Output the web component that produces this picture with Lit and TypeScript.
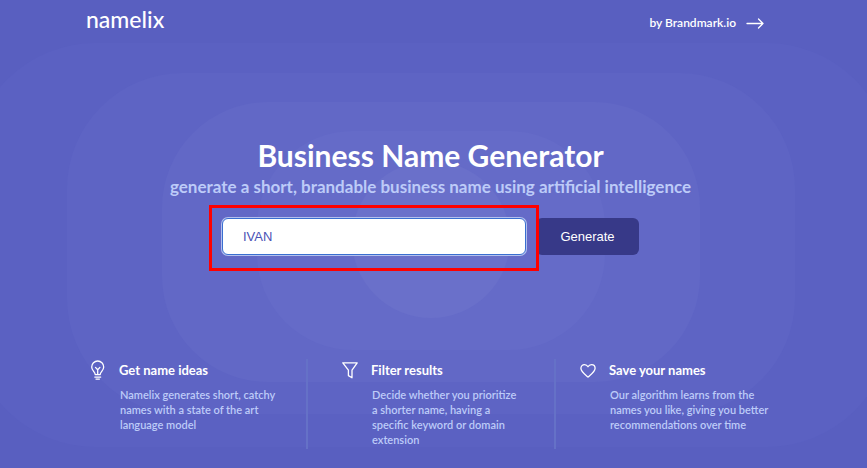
import { LitElement, html, svg, css } from "lit";
import { customElement, state } from "lit/decorators.js";

const bulb = svg`<svg viewBox="0 0 16 20" width="16" height="20" aria-hidden="true">
  <path d="M5.2 14.6C5.2 11.8 1.7 10.6 1.7 6.9a6 5.9 0 0 1 12 0c0 3.7-3.5 4.9-3.5 7.7zM7.7 14.2V9.6M5.5 7.4l2.2 2.3 2.2-2.3M4.8 17.1h5.9M6 19.1h3.4"/></svg>`;
const funnel = svg`<svg viewBox="0 0 16 20" width="16" height="20" aria-hidden="true">
  <path d="M.8 2.8h14.4l-5.200 7.400v7.600l-3.600-2.200v-5.400z"/></svg>`;
const heart = svg`<svg viewBox="0 0 16 20" width="16" height="20" aria-hidden="true">
  <path d="M8 17C5 14.5.9 11.8.9 8.3.9 6.1 2.5 4.6 4.5 4.6 6.1 4.6 7.3 5.5 8 6.8c.7-1.3 1.9-2.2 3.5-2.2 2 0 3.6 1.5 3.6 3.7C15.1 11.8 11 14.5 8 17z"/></svg>`;

const features = [
  { icon: bulb, title: "Get name ideas", lines: ["Namelix generates short, catchy", "names with a state of the art", "language model"] },
  { icon: funnel, title: "Filter results", lines: ["Decide whether you prioritize", "a shorter name, having a", "specific keyword or domain", "extension"] },
  { icon: heart, title: "Save your names", lines: ["Our algorithm learns from the", "names you like, giving you better", "recommendations over time"] },
];

const rings = [
  { y: 43, w: 920, h: 404, r: 124, fill: "#5b61c2" },
  { y: 73, w: 728, h: 341, r: 116, fill: "#5e64c4" },
  { y: 102, w: 538, h: 280, r: 106, fill: "#6268c6" },
  { y: 131, w: 348, h: 219, r: 96, fill: "#656bc8" },
  { y: 161, w: 158, h: 157, r: 79, fill: "#6a70ca" },
];

@customElement("app-root")
export class AppRoot extends LitElement {
  @state() keyword = "IVAN";

  static styles = css`
    :host {
      display: block;
      font-family: Lato, "Open Sans", sans-serif;
      color: #fff;
    }
    * { box-sizing: border-box; }
    .page {
      position: relative;
      min-height: 100vh;
      overflow: hidden;
      background: #595fc0;
    }
    .rings {
      position: absolute;
      inset: 0;
      width: 100%;
      height: 100%;
    }
    .content { position: relative; padding-right: 6px; }
    header {
      display: flex;
      justify-content: space-between;
      align-items: center;
      height: 44px;
      padding: 0 97px 0 86px;
    }
    a { color: inherit; text-decoration: none; }
    .logo { font-size: 23px; line-height: 36px; padding-bottom: 6px; font-weight: 500; }
    .by {
      display: flex;
      align-items: center;
      gap: 10px;
      font-size: 12px;
      font-weight: 600;
    }
    svg { flex: none; fill: none; stroke: #fff; stroke-width: 1.3; stroke-linecap: round; stroke-linejoin: round; }
    .by svg { margin-top: 2px; }
    .rings { stroke: none; }
    .hero { padding-top: 91px; text-align: center; }
    h1 { margin: 0; font-size: 30px; line-height: 40px; font-weight: 700; }
    .sub { margin: 0; font-size: 17px; line-height: 24px; font-weight: 700; color: #bdcbf8; }
    form {
      display: flex;
      justify-content: center;
      margin-top: 19px;
      gap: 10px;
    }
    .field { position: relative; width: 304px; }
    .mark {
      position: absolute;
      inset: -13px -13px -16px;
      z-index: 1;
      border: 3px solid #f00;
      pointer-events: none;
    }
    input, button { height: 37px; font: 13px "Liberation Sans", Arial, sans-serif; border-radius: 6px; }
    input {
      display: block;
      width: 100%;
      padding: 0 20px;
      border: 1px solid #3a6fd0;
      box-shadow: 0 0 0 1px #b3c0ee;
      color: #4a52b5;
      background: #fff;
      outline: none;
    }
    button { width: 103px; padding: 0; border: 0; color: #fff; background: #373988; }
    .features {
      display: grid;
      grid-template-columns: 216fr 248fr 307fr;
      margin: 104px 0 0 90px;
    }
    .feature {
      display: grid;
      grid-template-columns: 16px 1fr;
      column-gap: 13px;
      align-content: start;
      height: 90px;
    }
    .feature svg { margin-top: 1px; }
    .feature + .feature { border-left: 2px solid #6571c7; padding-left: 34px; }
    .feature:last-child { padding-left: 24px; }
    h2 { margin: 0; font-size: 13px; line-height: 22px; font-weight: 700; }
    .feature p {
      grid-column: 2;
      margin: 6px 0 0 1px;
      font-size: 11px;
      line-height: 15px;
      font-weight: 600;
      color: #bdcbf8;
      white-space: nowrap;
    }
  `;

  render() {
    return html`<div class="page">
      <svg class="rings" viewBox="0 0 867 468" preserveAspectRatio="xMidYMid slice" aria-hidden="true">
        ${rings.map((r) => svg`<rect x=${431 - r.w / 2} y=${r.y} width=${r.w} height=${r.h} rx=${r.r} fill=${r.fill} />`)}
      </svg>
      <div class="content">
        <header>
          <a class="logo" href="#">namelix</a>
          <a class="by" href="#">by Brandmark.io
            <svg viewBox="0 0 18 12" width="18" height="12" aria-hidden="true"><path d="M1 6.5h16M12.500 2l4.500 4.500-4.500 4.500"/></svg>
          </a>
        </header>
        <main>
          <section class="hero">
            <h1>Business Name Generator</h1>
            <p class="sub">generate a short, brandable business name using artificial intelligence</p>
            <form @submit=${(e: Event) => e.preventDefault()}>
              <div class="field">
                <input aria-label="Keyword" .value=${this.keyword}
                  @input=${(e: Event) => (this.keyword = (e.target as HTMLInputElement).value)} />
                <div class="mark"></div>
              </div>
              <button>Generate</button>
            </form>
          </section>
          <section class="features">
            ${features.map((f) => html`<article class="feature">
              ${f.icon}
              <h2>${f.title}</h2>
              <p>${f.lines.map((l, i) => html`${i ? html`<br />` : ""}${l}`)}</p>
            </article>`)}
          </section>
        </main>
      </div>
    </div>`;
  }
}
